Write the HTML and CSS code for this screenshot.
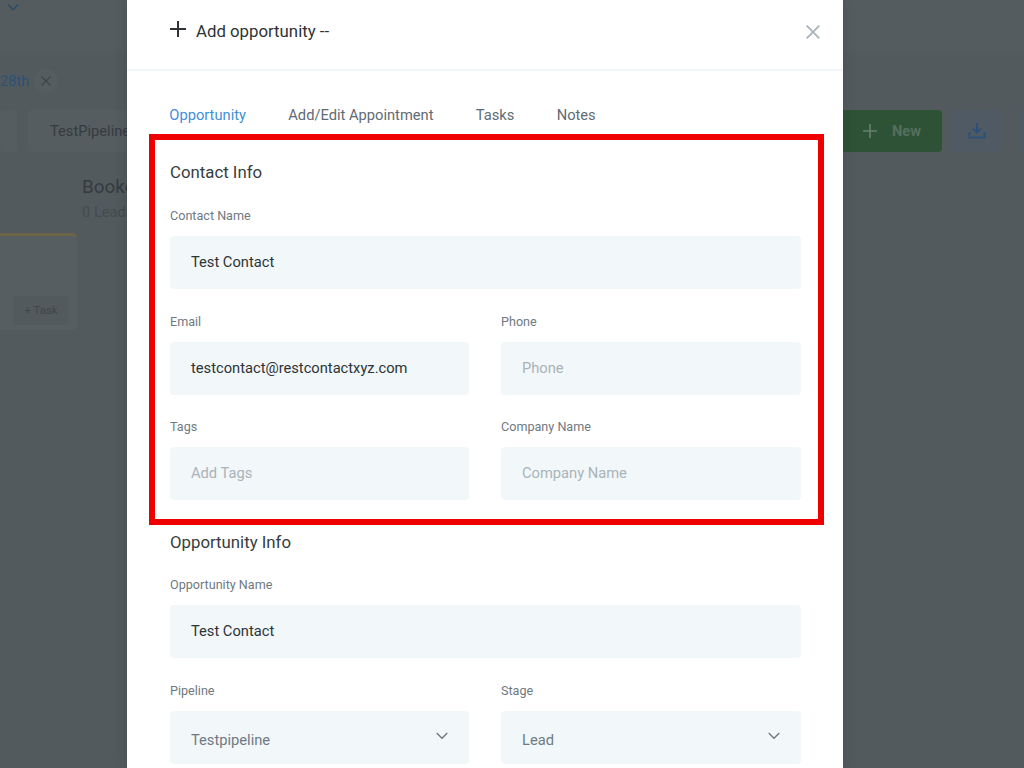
FILE: index.html
```html
<!DOCTYPE html>
<html lang="en">
<head>
    <meta charset="UTF-8">
    <meta name="viewport" content="width=device-width, initial-scale=1.0">
    <title>Add opportunity</title>
    <link rel="stylesheet" href="styles.css">
</head>
<body>
    <!-- Page behind the modal -->
    <div class="page">
        <div class="page-top">
            <svg class="top-chevron" width="12" height="8" viewBox="0 0 12 8"><path d="M1 1.500l5 5 5-5" fill="none" stroke="#2f4d69" stroke-width="1.600"/></svg>
        </div>
        <div class="filter-tag">
            <span class="filter-date">28th</span>
            <span class="filter-close">
                <svg width="10" height="10" viewBox="0 0 10 10"><path d="M0.500 0.500l9 9M9.500 0.500l-9 9" stroke="#3d4548" stroke-width="1.200"/></svg>
            </span>
        </div>
        <div class="toolbar">
            <div class="tool-box tool-first"></div>
            <div class="tool-box tool-pipeline">TestPipeline</div>
            <div class="toolbar-right">
                <div class="new-btn">
                    <svg width="16" height="16" viewBox="0 0 16 16"><path d="M8 1v14M1 8h14" stroke="#66806c" stroke-width="1.600"/></svg>
                    <span>New</span>
                </div>
                <div class="icon-btn">
                    <svg width="18" height="18" viewBox="0 0 18 18"><path d="M9 1v9M5.200 6.600L9 10.600l3.800-4M1.500 10v5.500h15V10" fill="none" stroke="#2c5077" stroke-width="2"/></svg>
                </div>
                <div class="icon-btn next"></div>
            </div>
        </div>
        <div class="board">
            <div class="stage-head">
                <div class="stage-name">Booked</div>
                <div class="stage-count">0 Leads</div>
            </div>
            <div class="lead-card">
                <div class="task-btn">+ Task</div>
            </div>
        </div>
    </div>

    <!-- Modal -->
    <div class="modal">
        <div class="modal-header">
            <svg class="plus-icon" width="18" height="18" viewBox="0 0 18 18"><path d="M9 1v16M1 9h16" stroke="#2d3436" stroke-width="2"/></svg>
            <div class="modal-title">Add opportunity --</div>
            <svg class="close-icon" width="14" height="14" viewBox="0 0 14 14"><path d="M0.700 0.700l12.600 12.600M13.300 0.700L0.700 13.300" stroke="#a9b3b8" stroke-width="1.800"/></svg>
        </div>
        <div class="modal-body">
            <div class="tabs">
                <div class="tab active">Opportunity</div>
                <div class="tab">Add/Edit Appointment</div>
                <div class="tab">Tasks</div>
                <div class="tab">Notes</div>
            </div>

            <div class="section-title first">Contact Info</div>
            <div class="form-grid">
                <div class="field wide">
                    <div class="field-label">Contact Name</div>
                    <div class="field-box">Test Contact</div>
                </div>
                <div class="field">
                    <div class="field-label">Email</div>
                    <div class="field-box">testcontact@restcontactxyz.com</div>
                </div>
                <div class="field">
                    <div class="field-label">Phone</div>
                    <div class="field-box placeholder">Phone</div>
                </div>
                <div class="field">
                    <div class="field-label">Tags</div>
                    <div class="field-box placeholder">Add Tags</div>
                </div>
                <div class="field">
                    <div class="field-label">Company Name</div>
                    <div class="field-box placeholder">Company Name</div>
                </div>
            </div>

            <div class="section-title second">Opportunity Info</div>
            <div class="form-grid">
                <div class="field wide">
                    <div class="field-label">Opportunity Name</div>
                    <div class="field-box">Test Contact</div>
                </div>
                <div class="field">
                    <div class="field-label">Pipeline</div>
                    <div class="field-box select">
                        <span>Testpipeline</span>
                        <svg width="12" height="8" viewBox="0 0 12 8"><path d="M0.700 1l5.300 5.300L11.300 1" fill="none" stroke="#6b7780" stroke-width="1.300"/></svg>
                    </div>
                </div>
                <div class="field">
                    <div class="field-label">Stage</div>
                    <div class="field-box select">
                        <span>Lead</span>
                        <svg width="12" height="8" viewBox="0 0 12 8"><path d="M0.700 1l5.300 5.300L11.300 1" fill="none" stroke="#6b7780" stroke-width="1.300"/></svg>
                    </div>
                </div>
            </div>
        </div>
    </div>

    <!-- Red highlight over the contact section -->
    <div class="highlight"></div>
</body>
</html>
```

FILE: styles.css
```css
html, body {
    margin: 0;
    height: 768px;
    overflow: hidden;
}

body {
    position: relative;
    background-color: #525a5d;
    font-family: Roboto, "Liberation Sans", sans-serif;
}

/* Page behind the modal */
.page {
    height: 768px;
    overflow: hidden;
    color: #3a4144;
}

.page-top {
    height: 52px;
    background-color: #545c5f;
}

.top-chevron {
    display: block;
    margin-left: 7px;
    padding-top: 3px;
}

.filter-tag {
    display: flex;
    align-items: center;
    height: 26px;
    margin-top: 16px;
    font-size: 14.700px;
}

.filter-date {
    color: #2f5273;
}

.filter-close {
    display: flex;
    align-items: center;
    justify-content: center;
    width: 24px;
    height: 24px;
    margin-left: 5px;
    border-radius: 50%;
    background-color: #555d60;
}

.toolbar {
    display: flex;
    height: 42px;
    margin-top: 16px;
}

.tool-box {
    background-color: #555d60;
    border-radius: 4px;
}

.tool-first {
    width: 17px;
}

.tool-pipeline {
    width: 200px;
    margin-left: 11px;
    padding-left: 22px;
    font-size: 14.700px;
    line-height: 42px;
    color: #353c3f;
}

.toolbar-right {
    display: flex;
    gap: 10px;
    margin-left: auto;
    margin-right: -45px;
}

.new-btn {
    display: flex;
    align-items: center;
    gap: 14px;
    width: 142px;
    padding-left: 62px;
    box-sizing: border-box;
    background-color: #2e5236;
    border-radius: 4px;
    font-size: 14.700px;
    font-weight: 700;
    color: #566f5d;
}

.icon-btn {
    display: flex;
    align-items: center;
    justify-content: center;
    width: 49px;
    background-color: #505a64;
    border-radius: 4px;
}

.icon-btn.next {
    margin-left: 9px;
}

.stage-head {
    margin: 23px 0 0 82px;
}

.stage-name {
    font-size: 18.900px;
    line-height: 24px;
    color: #353c3f;
}

.stage-count {
    margin-top: 3px;
    font-size: 14.700px;
    line-height: 20px;
    color: #444c4f;
}

.lead-card {
    display: flex;
    align-items: flex-end;
    justify-content: flex-end;
    box-sizing: border-box;
    width: 77px;
    height: 97px;
    margin-top: 11px;
    padding: 0 8px 5px 0;
    background-color: #565e61;
    border-top: 3px solid #6e6546;
    border-radius: 0 5px 5px 0;
}

.task-btn {
    width: 56px;
    height: 29px;
    font-size: 11.500px;
    line-height: 29px;
    text-align: center;
    background-color: #525a5d;
    border-radius: 4px;
    color: #3f4649;
}

/* Modal */
.modal {
    position: absolute;
    top: 0;
    left: 127px;
    width: 716px;
    height: 768px;
    overflow: hidden;
    background-color: white;
    box-shadow: 0 0 14px rgba(0, 0, 0, 0.12);
}

.modal-header {
    display: flex;
    align-items: center;
    height: 71px;
    padding: 0 23px 8px 42px;
    box-sizing: border-box;
    border-bottom: 2px solid #f2f6fa;
}

.plus-icon {
    flex-shrink: 0;
    margin-top: -4px;
}

.modal-title {
    flex: 1;
    margin-left: 9px;
    font-size: 16.800px;
    color: #2d3436;
}

.close-icon {
    flex-shrink: 0;
    margin-top: 2px;
}

.modal-body {
    padding: 0 43px;
}

.tabs {
    display: flex;
    gap: 42.300px;
    margin: 34px 0 0 -0.700px;
    font-size: 14.700px;
    line-height: 20px;
    color: #5f6b73;
}

.tab.active {
    color: #3f8fd8;
}

.section-title {
    font-size: 16.800px;
    line-height: 22px;
    color: #363d40;
}

.section-title.first {
    margin-top: 36px;
    padding-bottom: 1px;
}

.section-title.second {
    margin-top: 31px;
}

.form-grid {
    display: grid;
    grid-template-columns: 299px 300px;
    column-gap: 32px;
    row-gap: 23.500px;
    margin-top: 23px;
}

.field.wide {
    grid-column: 1 / 3;
}

.field-label {
    font-size: 12.600px;
    line-height: 18px;
    margin-bottom: 11px;
    color: #6f7a82;
}

.field-box {
    display: flex;
    align-items: center;
    height: 53px;
    padding: 0 21px 1px;
    box-sizing: border-box;
    background-color: #f2f7fa;
    border-radius: 4px;
    font-size: 14.700px;
    color: #2d3436;
}

.field-box.placeholder {
    color: #a9b3b8;
}

.field-box.select {
    justify-content: space-between;
    color: #6f7a82;
}

.field-box.select span {
    padding-top: 6px;
}

.field-box.select svg {
    margin-top: -1px;
}

/* Red highlight over the contact section */
.highlight {
    position: absolute;
    top: 134px;
    left: 149px;
    width: 675px;
    height: 391px;
    box-sizing: border-box;
    border: 6px solid #ee0000;
}
```
